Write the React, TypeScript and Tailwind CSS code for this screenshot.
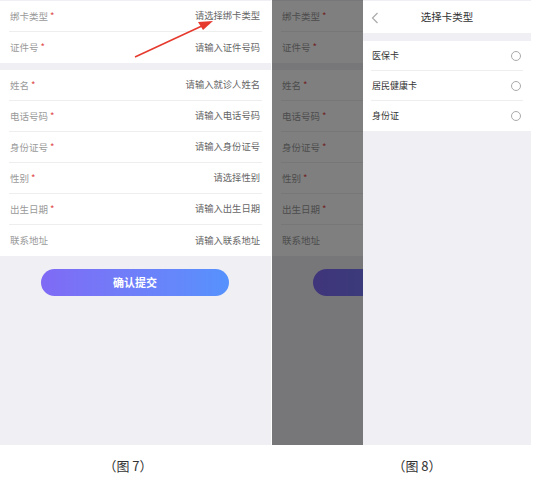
import React from "react";

const font = { fontFamily: '"Noto Sans CJK SC", "Noto Sans", sans-serif' };

type Row = { label: string; req: boolean; ph: string };

const sec1: Row[] = [
  { label: "绑卡类型", req: true, ph: "请选择绑卡类型" },
  { label: "证件号", req: true, ph: "请输入证件号码" },
];
const sec2: Row[] = [
  { label: "姓名", req: true, ph: "请输入就诊人姓名" },
  { label: "电话号码", req: true, ph: "请输入电话号码" },
  { label: "身份证号", req: true, ph: "请输入身份证号" },
  { label: "性别", req: true, ph: "请选择性别" },
  { label: "出生日期", req: true, ph: "请输入出生日期" },
  { label: "联系地址", req: false, ph: "请输入联系地址" },
];

function Section({ rows, covered }: { rows: Row[]; covered: boolean }) {
  return (
    <div className="bg-white">
      {rows.map((r, i) => (
        <div
          key={r.label}
          className={
            "mx-[9px] flex h-[31px] items-center justify-between " +
            (i < rows.length - 1 ? "border-b border-[#eeeeee]" : "")
          }
        >
          <span className="pl-[1px] text-[9.5px] text-[#9a9a9a]">
            {r.label}
            {r.req && <span className="ml-[2px] text-[#e04848]">*</span>}
          </span>
          <span
            className={
              "pr-[2px] text-[9.3px] text-[#666666] " + (covered ? "invisible" : "")
            }
          >
            {r.ph}
          </span>
        </div>
      ))}
    </div>
  );
}

function Form({ covered }: { covered: boolean }) {
  return (
    <div className="flex h-[445px] flex-col bg-[#efeff4] pt-[1px]">
      <Section rows={sec1} covered={covered} />
      <div className="h-[7px]" />
      <Section rows={sec2} covered={covered} />
      <div className="mt-[13px] ml-[41px] flex h-[27px] w-[188px] items-center justify-center rounded-full bg-gradient-to-r from-[#7f6af5] to-[#5592fd] text-[11px] font-bold text-white">
        {covered ? "" : "确认提交"}
      </div>
    </div>
  );
}

export default function App() {
  return (
    <div className="h-[477px] w-[535px] bg-white" style={font}>
      <div className="flex">
        <div className="relative w-[271px] shrink-0">
          <Form covered={false} />
          <svg
            className="absolute left-0 top-0"
            width="271"
            height="80"
            viewBox="0 0 271 80"
          >
            <line x1="135" y1="57" x2="204" y2="25" stroke="#e63a2e" strokeWidth="1.6" />
            <polygon points="213,21 198,22 203,30" fill="#e63a2e" />
          </svg>
        </div>
        <div className="relative ml-[1px] w-[259px] shrink-0 overflow-hidden">
          <Form covered={true} />
          <div className="absolute inset-0 bg-black/50" />
          <div className="absolute left-[91px] top-0 flex h-[445px] w-[168px] flex-col bg-[#efeff4] pt-[1px]">
            <div className="relative flex h-[32px] items-center justify-center bg-white">
              <svg
                className="absolute left-[8px] top-[11px]"
                width="8"
                height="12"
                viewBox="0 0 8 12"
              >
                <polyline points="6.5,1 1.5,6 6.5,11" fill="none" stroke="#aaaaaa" strokeWidth="1.2" />
              </svg>
              <span className="text-[10.5px] text-[#333333]">选择卡类型</span>
            </div>
            <div className="mt-[8px] bg-white">
              {["医保卡", "居民健康卡", "身份证"].map((t, i) => (
                <div
                  key={t}
                  className={
                    "ml-[8px] mr-[8px] flex h-[30px] items-center justify-between " +
                    (i < 2 ? "border-b border-[#eeeeee]" : "")
                  }
                >
                  <span className="pl-[1px] text-[9px] text-[#333333]">{t}</span>
                  <span className="mr-[2px] h-[10px] w-[10px] rounded-full border border-[#aaaaaa]" />
                </div>
              ))}
            </div>
          </div>
        </div>
      </div>
      <div className="mt-[13px] flex text-[13px] leading-[16px] text-[#333333]">
        <div className="w-[256px] shrink-0 text-center">（图 7）</div>
        <div className="flex-1 pl-[43px] text-center">（图 8）</div>
      </div>
    </div>
  );
}
